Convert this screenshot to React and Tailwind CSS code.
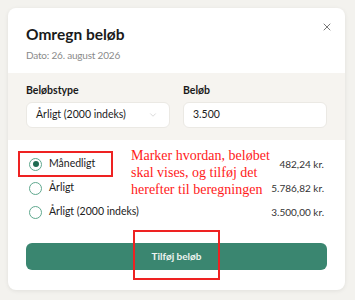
import React, { useState } from "react";
import { X, ChevronDown } from "lucide-react";

const OPTIONS = [
  { id: "monthly", label: "Månedligt", amount: "482,24 kr." },
  { id: "yearly", label: "Årligt", amount: "5.786,82 kr." },
  { id: "index", label: "Årligt (2000 indeks)", amount: "3.500,00 kr." },
];

function Radio({ checked }) {
  return (
    <span className="flex h-[13px] w-[13px] items-center justify-center rounded-full border border-[#5fa88e] bg-white">
      {checked && <span className="h-[6px] w-[6px] rounded-full bg-[#1f6b51]" />}
    </span>
  );
}

export default function App() {
  const [selected, setSelected] = useState("monthly");

  return (
    <div className="h-[300px] w-[355px] overflow-hidden bg-[#f3f2ee] p-2 font-['Lato',sans-serif] text-[#1c1c1c]">
      <div className="relative w-[337px] overflow-hidden rounded-lg bg-white shadow-[0_1px_4px_rgba(0,0,0,0.08)]">
        <div className="flex items-start justify-between px-[18px] pt-[14px] pb-[10px]">
          <div>
            <h2 className="text-[15.5px] font-bold leading-6 text-[#1a1a1a]">Omregn beløb</h2>
            <p className="mt-px text-[10px] leading-4 tracking-[-0.2px] text-[#8a8a8a]">Dato: 26. august 2026</p>
          </div>
          <X size={12} strokeWidth={1.6} className="-mt-[1px] -mr-[6px] text-[#555]" />
        </div>

        <div className="grid grid-cols-2 gap-[13px] bg-[#f6f4f0] px-[18px] pt-[9px] pb-3">
          <div>
            <div className="text-[10.5px] font-bold leading-4 text-[#1a1a1a]">Beløbstype</div>
            <div className="mt-1 flex h-[26px] items-center justify-between rounded-md border border-[#ebe9e4] bg-white pr-[11px] pl-[9px] text-[10.5px]">
              <span>Årligt (2000 indeks)</span>
              <ChevronDown size={10} strokeWidth={1.2} className="text-[#b5b5b5]" />
            </div>
          </div>
          <div>
            <div className="text-[10.5px] font-bold leading-4 text-[#1a1a1a]">Beløb</div>
            <div className="mt-1 flex h-[26px] items-center rounded-md border border-[#ebe9e4] bg-white pl-[9px] text-[10.5px]">
              3.500
            </div>
          </div>
        </div>

        <div className="px-[18px] pt-3 pb-5">
          <div className="flex flex-col">
            {OPTIONS.map((o) => (
              <button
                key={o.id}
                onClick={() => setSelected(o.id)}
                className="flex h-6 items-center justify-between pl-[3px] pr-[3px] text-left"
              >
                <span className="flex items-center gap-[7px]">
                  <Radio checked={selected === o.id} />
                  <span className="text-[10.5px] text-[#222]">{o.label}</span>
                </span>
                <span className="text-[10px] text-[#333]">{o.amount}</span>
              </button>
            ))}
          </div>
          <button className="mt-[19px] flex h-[27px] w-full items-center justify-center rounded-md bg-[#3a8670] text-[10px] font-bold text-[#eef4f1]">
            Tilføj beløb
          </button>
        </div>

        <div className="pointer-events-none absolute top-[143px] left-[10px] h-[26px] w-[95px] border-2 border-[#ee2222]" />
        <div className="pointer-events-none absolute top-[139px] left-[123px] font-['Liberation_Serif',serif] text-[14px] leading-[17px] text-[#ff1a1a]">
          Marker hvordan, beløbet
          <br />
          skal vises, og tilføj det
          <br />
          herefter til beregningen
        </div>
        <div className="pointer-events-none absolute top-[222px] left-[125px] h-[50px] w-[87px] border-2 border-[#ee2222]" />
      </div>
    </div>
  );
}
